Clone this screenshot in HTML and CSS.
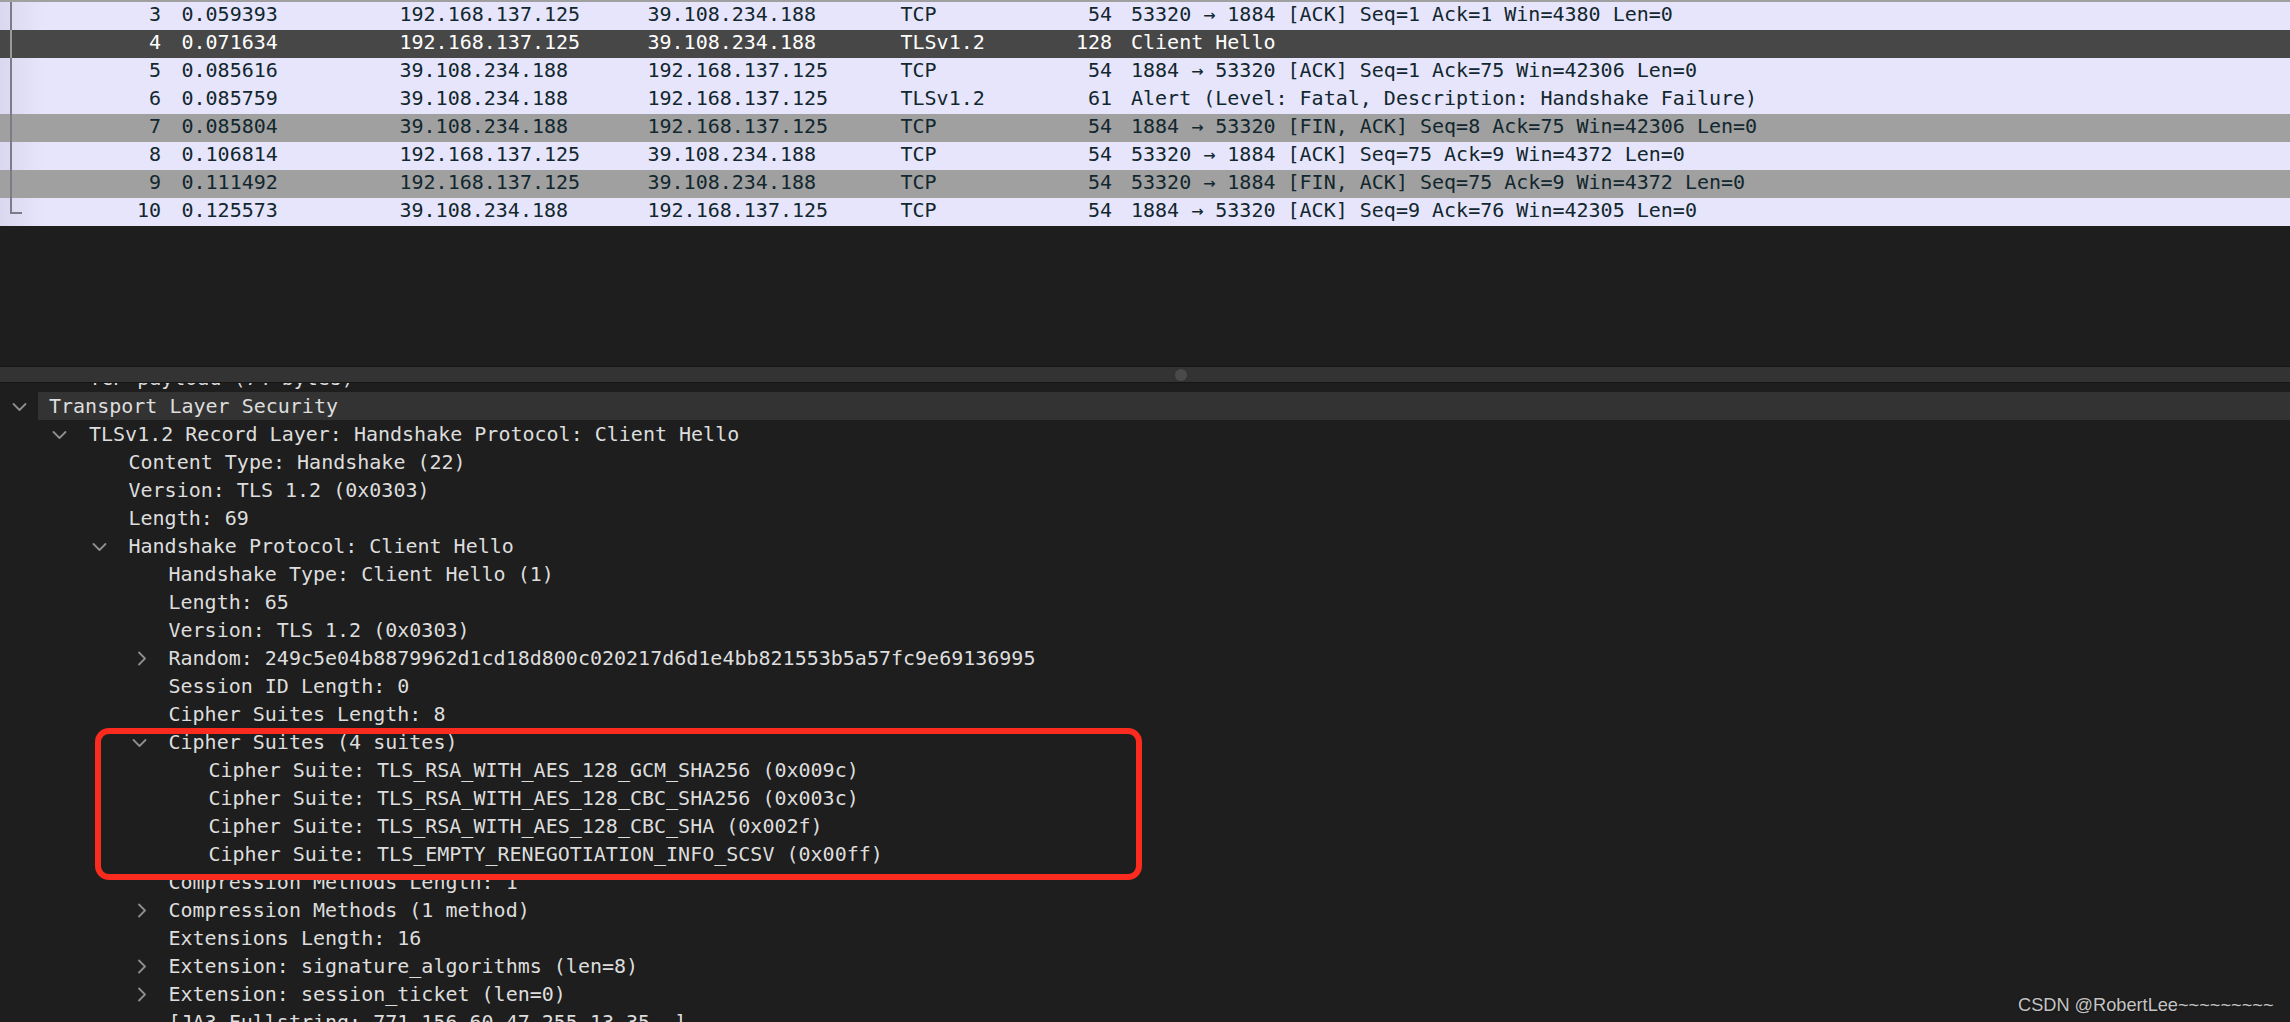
FILE: index.html
```html
<!DOCTYPE html>
<html>
<head>
<meta charset="utf-8">
<link rel="stylesheet" href="styles.css">
</head>
<body>
<div class="app">
  <div class="plist">
    <div class="prow light rel-mid"><span class="c-no">3</span><span class="c-time">0.059393</span><span>192.168.137.125</span><span>39.108.234.188</span><span>TCP</span><span class="c-len">54</span><span class="c-info">53320 → 1884 [ACK] Seq=1 Ack=1 Win=4380 Len=0</span></div>
    <div class="prow sel rel-mid"><span class="c-no">4</span><span class="c-time">0.071634</span><span>192.168.137.125</span><span>39.108.234.188</span><span>TLSv1.2</span><span class="c-len">128</span><span class="c-info">Client Hello</span></div>
    <div class="prow light rel-mid"><span class="c-no">5</span><span class="c-time">0.085616</span><span>39.108.234.188</span><span>192.168.137.125</span><span>TCP</span><span class="c-len">54</span><span class="c-info">1884 → 53320 [ACK] Seq=1 Ack=75 Win=42306 Len=0</span></div>
    <div class="prow light rel-mid"><span class="c-no">6</span><span class="c-time">0.085759</span><span>39.108.234.188</span><span>192.168.137.125</span><span>TLSv1.2</span><span class="c-len">61</span><span class="c-info">Alert (Level: Fatal, Description: Handshake Failure)</span></div>
    <div class="prow gray rel-mid"><span class="c-no">7</span><span class="c-time">0.085804</span><span>39.108.234.188</span><span>192.168.137.125</span><span>TCP</span><span class="c-len">54</span><span class="c-info">1884 → 53320 [FIN, ACK] Seq=8 Ack=75 Win=42306 Len=0</span></div>
    <div class="prow light rel-mid"><span class="c-no">8</span><span class="c-time">0.106814</span><span>192.168.137.125</span><span>39.108.234.188</span><span>TCP</span><span class="c-len">54</span><span class="c-info">53320 → 1884 [ACK] Seq=75 Ack=9 Win=4372 Len=0</span></div>
    <div class="prow gray rel-mid"><span class="c-no">9</span><span class="c-time">0.111492</span><span>192.168.137.125</span><span>39.108.234.188</span><span>TCP</span><span class="c-len">54</span><span class="c-info">53320 → 1884 [FIN, ACK] Seq=75 Ack=9 Win=4372 Len=0</span></div>
    <div class="prow light rel-end"><span class="c-no">10</span><span class="c-time">0.125573</span><span>39.108.234.188</span><span>192.168.137.125</span><span>TCP</span><span class="c-len">54</span><span class="c-info">1884 → 53320 [ACK] Seq=9 Ack=76 Win=42305 Len=0</span></div>
  </div>

  <div class="splitter"><span class="grip"></span></div>

  <div class="details">
    <div class="tree">
      <div class="drow l1"><span class="chev"></span><span class="lbl">TCP payload (74 bytes)</span></div>
      <div class="drow l0"><span class="chev"><svg class="down" width="15" height="10" viewBox="0 0 15 10"><polyline points="1.5,2 7.5,8 13.5,2"/></svg></span><span class="lbl hl">Transport Layer Security</span></div>
      <div class="drow l1"><span class="chev"><svg class="down" width="15" height="10" viewBox="0 0 15 10"><polyline points="1.5,2 7.5,8 13.5,2"/></svg></span><span class="lbl">TLSv1.2 Record Layer: Handshake Protocol: Client Hello</span></div>
      <div class="drow l2"><span class="chev"></span><span class="lbl">Content Type: Handshake (22)</span></div>
      <div class="drow l2"><span class="chev"></span><span class="lbl">Version: TLS 1.2 (0x0303)</span></div>
      <div class="drow l2"><span class="chev"></span><span class="lbl">Length: 69</span></div>
      <div class="drow l2"><span class="chev"><svg class="down" width="15" height="10" viewBox="0 0 15 10"><polyline points="1.5,2 7.5,8 13.5,2"/></svg></span><span class="lbl">Handshake Protocol: Client Hello</span></div>
      <div class="drow l3"><span class="chev"></span><span class="lbl">Handshake Type: Client Hello (1)</span></div>
      <div class="drow l3"><span class="chev"></span><span class="lbl">Length: 65</span></div>
      <div class="drow l3"><span class="chev"></span><span class="lbl">Version: TLS 1.2 (0x0303)</span></div>
      <div class="drow l3"><span class="chev"><svg class="right" width="10" height="15" viewBox="0 0 10 15"><polyline points="2,1.5 8,7.5 2,13.5"/></svg></span><span class="lbl">Random: 249c5e04b8879962d1cd18d800c020217d6d1e4bb821553b5a57fc9e69136995</span></div>
      <div class="drow l3"><span class="chev"></span><span class="lbl">Session ID Length: 0</span></div>
      <div class="drow l3"><span class="chev"></span><span class="lbl">Cipher Suites Length: 8</span></div>
      <div class="drow l3"><span class="chev"><svg class="down" width="15" height="10" viewBox="0 0 15 10"><polyline points="1.5,2 7.5,8 13.5,2"/></svg></span><span class="lbl">Cipher Suites (4 suites)</span></div>
      <div class="drow l4"><span class="chev"></span><span class="lbl">Cipher Suite: TLS_RSA_WITH_AES_128_GCM_SHA256 (0x009c)</span></div>
      <div class="drow l4"><span class="chev"></span><span class="lbl">Cipher Suite: TLS_RSA_WITH_AES_128_CBC_SHA256 (0x003c)</span></div>
      <div class="drow l4"><span class="chev"></span><span class="lbl">Cipher Suite: TLS_RSA_WITH_AES_128_CBC_SHA (0x002f)</span></div>
      <div class="drow l4"><span class="chev"></span><span class="lbl">Cipher Suite: TLS_EMPTY_RENEGOTIATION_INFO_SCSV (0x00ff)</span></div>
      <div class="drow l3"><span class="chev"></span><span class="lbl">Compression Methods Length: 1</span></div>
      <div class="drow l3"><span class="chev"><svg class="right" width="10" height="15" viewBox="0 0 10 15"><polyline points="2,1.5 8,7.5 2,13.5"/></svg></span><span class="lbl">Compression Methods (1 method)</span></div>
      <div class="drow l3"><span class="chev"></span><span class="lbl">Extensions Length: 16</span></div>
      <div class="drow l3"><span class="chev"><svg class="right" width="10" height="15" viewBox="0 0 10 15"><polyline points="2,1.5 8,7.5 2,13.5"/></svg></span><span class="lbl">Extension: signature_algorithms (len=8)</span></div>
      <div class="drow l3"><span class="chev"><svg class="right" width="10" height="15" viewBox="0 0 10 15"><polyline points="2,1.5 8,7.5 2,13.5"/></svg></span><span class="lbl">Extension: session_ticket (len=0)</span></div>
      <div class="drow l3"><span class="chev"></span><span class="lbl">[JA3 Fullstring: 771,156-60-47-255,13-35,,]</span></div>
    </div>
    <div class="annot"></div>
  </div>
</div>
<div class="watermark">CSDN @RobertLee~~~~~~~~~</div>
</body>
</html>
```

FILE: styles.css
```css
html, body {
  margin: 0;
  padding: 0;
}
body {
  width: 2290px;
  height: 1022px;
  overflow: hidden;
  background: #1e1e1e;
  font-family: "DejaVu Sans Mono", "Liberation Mono", monospace;
  font-size: 20px;
  position: relative;
}
.app {
  display: flex;
  flex-direction: column;
  height: 1022px;
}

/* packet list */
.plist {
  height: 366px;
  flex: none;
  box-sizing: border-box;
  border-top: 2px solid #a0a0a0;
  background: #1e1e1e;
}
.prow {
  display: grid;
  grid-template-columns: 161px 238.5px 248px 253px 111.5px 100px 1fr;
  height: 28px;
  line-height: 25px;
  white-space: pre;
  position: relative;
  color: #12272e;
}
.prow.light {
  background: linear-gradient(90deg, #d9d8f0 0px, #e6e5fb 44px);
}
.prow.gray {
  background: #a0a0a0;
}
.prow.sel {
  background: #474747;
  color: #ffffff;
}
.c-no { text-align: right; }
.c-time { padding-left: 20.5px; }
.c-len { text-align: right; }
.c-info { padding-left: 19px; }

/* related-packet bracket indicator */
.rel-mid::before,
.rel-end::before {
  content: "";
  position: absolute;
  left: 10px;
  top: 0;
  width: 2px;
  height: 28px;
  background: #7c7c86;
}
.prow.sel.rel-mid::before {
  background: #9a9a9a;
}
.rel-end::before {
  height: 16px;
}
.rel-end::after {
  content: "";
  position: absolute;
  left: 10px;
  top: 14px;
  width: 12px;
  height: 2px;
  background: #7c7c86;
}

/* splitter */
.splitter {
  height: 17px;
  flex: none;
  box-sizing: border-box;
  border-top: 1px solid #151515;
  border-bottom: 1px solid #151515;
  background: #333333;
  display: flex;
  align-items: center;
  padding-left: 1175px;
}
.grip {
  width: 12px;
  height: 12px;
  border-radius: 50%;
  background: #4a4a4a;
}

/* details tree */
.details {
  flex: 1;
  overflow: hidden;
  position: relative;
  background: #1e1e1e;
}
.tree {
  margin-top: -19px;
}
.drow {
  display: flex;
  height: 28px;
  line-height: 29px;
  color: #dddddd;
  white-space: pre;
}
.drow.l0 { padding-left: 11px; }
.drow.l1 { padding-left: 51px; }
.drow.l2 { padding-left: 90.5px; }
.drow.l3 { padding-left: 130.5px; }
.drow.l4 { padding-left: 170.5px; }
.chev {
  width: 37px;
  flex: none;
  display: flex;
  align-items: center;
  padding-left: 1px;
}
.chev svg polyline {
  fill: none;
  stroke: #8e8e8e;
  stroke-width: 1.8;
  stroke-linecap: round;
  stroke-linejoin: round;
}
.chev svg.down { margin-top: 2px; }
.chev svg.right { margin-left: 5px; }
.lbl {
  flex: 1;
}
.lbl.hl {
  background: #333333;
  margin-left: -11px;
  padding-left: 11px;
}

/* red annotation box */
.annot {
  position: absolute;
  left: 95px;
  top: 345px;
  width: 1047px;
  height: 152px;
  box-sizing: border-box;
  border: 6px solid #fb2b1f;
  border-radius: 14px;
}

/* watermark */
.watermark {
  position: absolute;
  left: 2018px;
  top: 995px;
  font-family: "Liberation Sans", Arial, sans-serif;
  font-size: 18.2px;
  line-height: 20px;
  color: #c4c4c4;
  text-shadow: 0 0 2px rgba(0, 0, 0, 0.6);
  white-space: pre;
}
```
